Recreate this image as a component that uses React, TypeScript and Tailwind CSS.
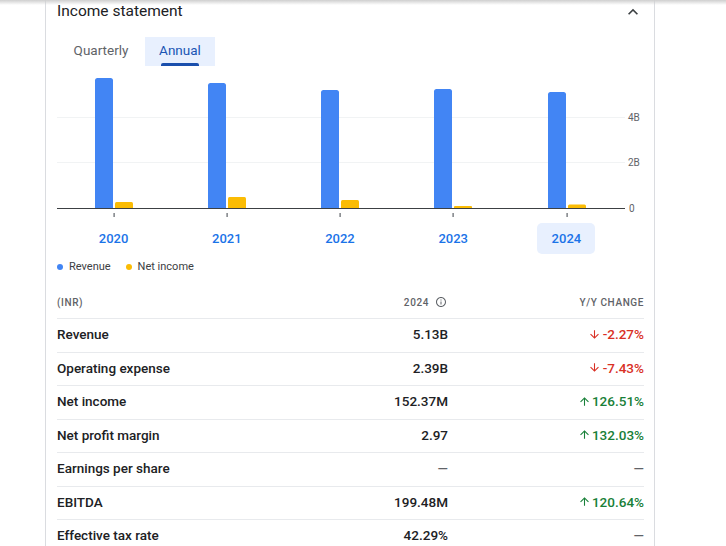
import React from "react";

const years = ["2020", "2021", "2022", "2023", "2024"];
const revTops = [8, 13, 20, 19, 22];
const niTops = [132, 127, 130, 136, 134.5];
const BASE = 138;

function barPath(x: number, top: number, w: number, bottom: number, r: number) {
  const h = bottom - top;
  const rr = Math.min(r, h / 2);
  return `M${x} ${bottom} L${x} ${top + rr} Q${x} ${top} ${x + rr} ${top} L${x + w - rr} ${top} Q${x + w} ${top} ${x + w} ${top + rr} L${x + w} ${bottom} Z`;
}

function Chart() {
  const centers = years.map((_, i) => 56.6 + 113.25 * i);
  return (
    <svg width="586" height="148" viewBox="0 0 586 148" className="block">
      <line x1="0" x2="568" y1="47.5" y2="47.5" stroke="#f1f3f4" strokeWidth="1" />
      <line x1="0" x2="568" y1="92.5" y2="92.5" stroke="#f1f3f4" strokeWidth="1" />
      {centers.map((cx, i) => (
        <g key={i}>
          <path d={barPath(Math.round(cx) - 19, revTops[i], 18, BASE, 2.5)} fill="#4285f4" />
          <path d={barPath(Math.round(cx) + 1, niTops[i], 18, BASE, 1.5)} fill="#fbbc04" />
          <rect x={Math.round(cx) - 0.5} y="143" width="1.2" height="4" fill="#5f6368" />
        </g>
      ))}
      <line x1="0" x2="568" y1="138.5" y2="138.5" stroke="#3c4043" strokeWidth="1.2" />
      <text x="571" y="48" dominantBaseline="middle" fontSize="10" fill="#5f6368" fontFamily="Roboto, sans-serif">4B</text>
      <text x="571" y="93" dominantBaseline="middle" fontSize="10" fill="#5f6368" fontFamily="Roboto, sans-serif">2B</text>
      <text x="572" y="139" dominantBaseline="middle" fontSize="10" fill="#5f6368" fontFamily="Roboto, sans-serif">0</text>
    </svg>
  );
}

function ArrowDown() {
  return (
    <svg width="13" height="13" viewBox="0 0 24 24" fill="currentColor" className="shrink-0">
      <path d="M20 12l-1.41-1.41L13 16.17V4h-2v12.17l-5.58-5.59L4 12l8 8 8-8z" />
    </svg>
  );
}
function ArrowUp() {
  return (
    <svg width="13" height="13" viewBox="0 0 24 24" fill="currentColor" className="shrink-0">
      <path d="M4 12l1.41 1.41L11 7.83V20h2V7.83l5.58 5.59L20 12l-8-8-8 8z" />
    </svg>
  );
}

type Row = { label: string; value: string; change: string; dir: "up" | "down" | "none" };
const rows: Row[] = [
  { label: "Revenue", value: "5.13B", change: "-2.27%", dir: "down" },
  { label: "Operating expense", value: "2.39B", change: "-7.43%", dir: "down" },
  { label: "Net income", value: "152.37M", change: "126.51%", dir: "up" },
  { label: "Net profit margin", value: "2.97", change: "132.03%", dir: "up" },
  { label: "Earnings per share", value: "—", change: "—", dir: "none" },
  { label: "EBITDA", value: "199.48M", change: "120.64%", dir: "up" },
  { label: "Effective tax rate", value: "42.29%", change: "—", dir: "none" },
];

export default function App() {
  return (
    <div className="relative h-[546px] w-[726px] overflow-hidden bg-white font-['Roboto',sans-serif] text-[#202124]">
      <div className="absolute inset-x-0 top-0 h-[5px] bg-gradient-to-b from-[#cfcfcf] to-transparent" />
      <div className="ml-[45px] h-full w-[610px] border-x border-[#dadce0] pl-[11px] pr-[10px]">
        {/* Title */}
        <div className="flex h-[23px] items-center justify-between">
          <div className="text-[15.5px] leading-none text-[#202124]">Income statement</div>
          <svg width="20" height="20" viewBox="0 0 24 24" fill="#3c4043" className="mr-[1px]">
            <path d="M12 8l-6 6 1.41 1.41L12 10.83l4.59 4.58L18 14z" />
          </svg>
        </div>
        {/* Tabs */}
        <div className="mt-[14px] flex h-[29px]">
          <div className="flex w-[88px] items-center justify-center pb-[2px] text-[13.5px] text-[#5f6368]">Quarterly</div>
          <div className="relative flex w-[70px] items-center justify-center bg-[#e8f0fe] pb-[2px] text-[13.5px] text-[#1a55b4]">
            Annual
            <div className="absolute bottom-0 left-[16px] right-[16px] h-[3px] rounded-t-[2px] bg-[#1a4fad]" />
          </div>
        </div>
        {/* Chart */}
        <div className="mt-[4px]">
          <Chart />
        </div>
        {/* Year labels */}
        <div className="mt-[5px] grid h-[31px] w-[566px] grid-cols-5">
          {years.map((y, i) => (
            <div key={y} className="flex items-center justify-center">
              <div
                className={
                  i === 4
                    ? "flex h-[31px] w-[58px] items-center justify-center rounded-[5px] bg-[#e8f0fe] text-[13px] font-medium text-[#1a73e8]"
                    : "flex h-[31px] w-[58px] items-center justify-center text-[13px] font-medium text-[#1a73e8]"
                }
              >
                {y}
              </div>
            </div>
          ))}
        </div>
        {/* Legend */}
        <div className="mt-[4px] flex h-[18px] items-center text-[11px] text-[#3c4043]">
          <span className="h-[6px] w-[6px] rounded-full bg-[#4285f4]" />
          <span className="ml-[6px]">Revenue</span>
          <span className="ml-[15px] h-[6px] w-[6px] rounded-full bg-[#fbbc04]" />
          <span className="ml-[6px]">Net income</span>
        </div>
        {/* Table header */}
        <div className="mt-[10px] grid h-[33px] grid-cols-[1fr_140px_196px] items-center border-b border-[#e8eaed] text-[10px] font-medium tracking-[0.06em] text-[#5f6368]">
          <div>(INR)</div>
          <div className="flex items-center justify-end gap-[6px]">
            <span>2024</span>
            <svg width="12" height="12" viewBox="0 0 24 24" fill="#5f6368" className="mr-[1px]">
              <path d="M11 7h2v2h-2zm0 4h2v6h-2zm1-9C6.48 2 2 6.48 2 12s4.48 10 10 10 10-4.48 10-10S17.52 2 12 2zm0 18c-4.41 0-8-3.59-8-8s3.59-8 8-8 8 3.59 8 8-3.59 8-8 8z" />
            </svg>
          </div>
          <div className="text-right">Y/Y CHANGE</div>
        </div>
        {/* Rows */}
        {rows.map((r) => (
          <div
            key={r.label}
            className="grid h-[33.5px] grid-cols-[1fr_140px_196px] items-center border-b border-[#e8eaed] pb-[2px] text-[13.5px] font-medium"
          >
            <div className="text-[#202124]">{r.label}</div>
            <div className={r.value === "—" ? "text-right text-[#5f6368]" : "text-right text-[#202124]"}>{r.value}</div>
            <div className="flex items-center justify-end">
              {r.dir === "down" && (
                <span className="flex items-center gap-[2px] text-[#d93025]">
                  <ArrowDown />
                  {r.change}
                </span>
              )}
              {r.dir === "up" && (
                <span className="flex items-center gap-[1px] text-[#188038]">
                  <ArrowUp />
                  {r.change}
                </span>
              )}
              {r.dir === "none" && <span className="text-[#5f6368]">{r.change}</span>}
            </div>
          </div>
        ))}
      </div>
    </div>
  );
}
